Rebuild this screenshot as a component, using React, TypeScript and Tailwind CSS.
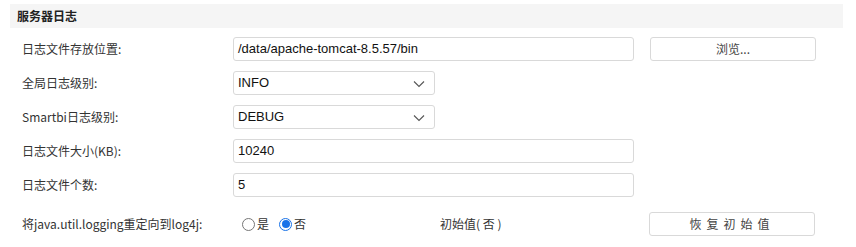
import React from "react";

const font = { fontFamily: '"Noto Sans CJK SC", "Noto Sans", sans-serif' };

function Chevron() {
  return (
    <svg width="12" height="8" viewBox="0 0 12 8" className="absolute right-[9px] top-[8px]">
      <path d="M1 1.5 L6 6.5 L11 1.5" fill="none" stroke="#555" strokeWidth="1.1" />
    </svg>
  );
}

function TextBox({ value, wide = true }: { value: string; wide?: boolean }) {
  return (
    <div
      className={`h-[24px] ${wide ? "w-[401px]" : "w-[202px]"} relative border border-[#d9d9d9] rounded-[3px] bg-white flex items-center px-[4px] text-[13px] text-[#111]`}
      style={{ fontFamily: '"Liberation Sans", Arial, sans-serif' }}
    >
      {value}
      {!wide && <Chevron />}
    </div>
  );
}

function Row({ label, children }: { label: string; children: React.ReactNode }) {
  return (
    <div className="flex items-center h-[24px]">
      <div className="w-[211px] text-[12px] text-[#333]">{label}</div>
      {children}
    </div>
  );
}

function Radio({ checked, label }: { checked?: boolean; label: string }) {
  return (
    <div className="flex items-center gap-[2px] text-[12px] text-[#333]">
      {checked ? (
        <span className="w-[13px] h-[13px] rounded-full border border-[#1a73e8] flex items-center justify-center">
          <span className="w-[8px] h-[8px] rounded-full bg-[#1a73e8]" />
        </span>
      ) : (
        <span className="w-[13px] h-[13px] rounded-full border border-[#767676] bg-white" />
      )}
      <span>{label}</span>
    </div>
  );
}

export default function App() {
  return (
    <div className="w-[856px] h-[247px] bg-white pt-[4px]" style={font}>
      <div className="ml-[10px] w-[833px] h-[24px] bg-[#f5f5f5] flex items-center pl-[7px] text-[12px] font-bold text-[#222]">
        服务器日志
      </div>
      <div className="pl-[22px] pt-[9px] flex flex-col gap-[10px]">
        <Row label="日志文件存放位置:">
          <TextBox value="/data/apache-tomcat-8.5.57/bin" />
          <button className="ml-[16px] w-[166px] h-[24px] border border-[#d9d9d9] rounded-[3px] bg-white text-[12px] text-[#444]">
            浏览...
          </button>
        </Row>
        <Row label="全局日志级别:">
          <TextBox value="INFO" wide={false} />
        </Row>
        <Row label="Smartbi日志级别:">
          <TextBox value="DEBUG" wide={false} />
        </Row>
        <Row label="日志文件大小(KB):">
          <TextBox value="10240" />
        </Row>
        <Row label="日志文件个数:">
          <TextBox value="5" />
        </Row>
      </div>
      <div className="pl-[22px] mt-[15px] flex items-center h-[24px]">
        <div className="w-[220px] shrink-0 text-[12px] text-[#333]">将java.util.logging重定向到log4j:</div>
        <div className="w-[198px] shrink-0 flex items-center gap-[10px]">
          <Radio label="是" />
          <Radio checked label="否" />
        </div>
        <div className="w-[209px] shrink-0 text-[12px] text-[#333]">初始值( 否 )</div>
        <button className="w-[166px] shrink-0 h-[24px] border border-[#d9d9d9] rounded-[3px] bg-white text-[12px] text-[#444] tracking-[5px]">
          恢复初始值
        </button>
      </div>
    </div>
  );
}
